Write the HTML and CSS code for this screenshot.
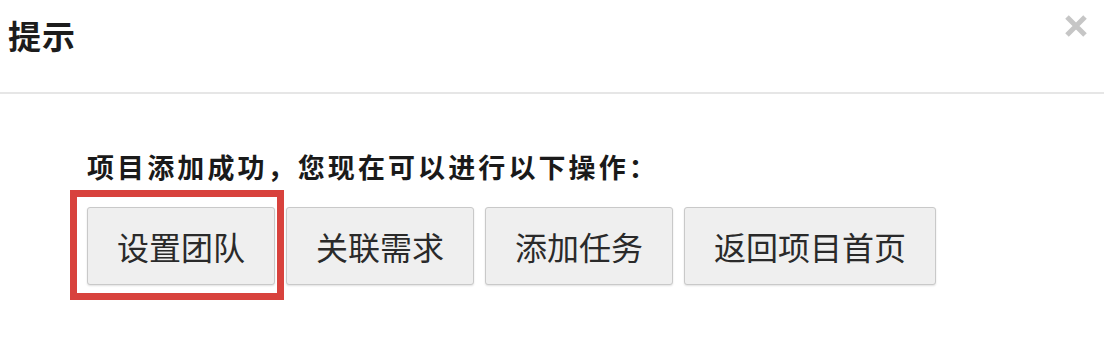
FILE: index.html
```html
<!DOCTYPE html>
<html lang="zh-CN">
<head>
<meta charset="utf-8">
<title>提示</title>
<link rel="stylesheet" href="styles.css">
</head>
<body>
<div class="dialog">
  <div class="dialog-header">
    <h1 class="dialog-title">提示</h1>
    <button class="dialog-close" aria-label="关闭">
      <svg width="24" height="22" viewBox="0 0 24 22"><path d="M3 2 L21 20 M21 2 L3 20" stroke="#c6c6c6" stroke-width="5" stroke-linecap="butt"/></svg>
    </button>
  </div>
  <div class="dialog-body">
    <p class="message">项目添加成功，您现在可以进行以下操作：</p>
    <div class="actions">
      <span class="highlight-wrap">
        <button class="btn">设置团队</button>
        <span class="highlight"></span>
      </span>
      <button class="btn">关联需求</button>
      <button class="btn">添加任务</button>
      <button class="btn">返回项目首页</button>
    </div>
  </div>
</div>
</body>
</html>
```

FILE: styles.css
```css
html, body {
  margin: 0;
  padding: 0;
  background: #ffffff;
}

body {
  font-family: "Noto Sans CJK SC", "Noto Sans", sans-serif;
  color: #222;
}

.dialog {
  width: 1104px;
  height: 348px;
}

.dialog-header {
  height: 92px;
  display: flex;
  justify-content: space-between;
  align-items: flex-start;
  border-bottom: 2px solid #e6e6e6;
  padding: 0 16px 0 8px;
}

.dialog-title {
  margin: 14px 0 0 0;
  font-size: 33px;
  line-height: 42px;
  font-weight: bold;
  letter-spacing: 1px;
  color: #1c1c1c;
}

.dialog-close {
  margin-top: 15px;
  padding: 0;
  border: 0;
  background: transparent;
  width: 24px;
  height: 22px;
  display: block;
}

.dialog-close svg {
  display: block;
}

.dialog-body {
  padding: 0 0 0 87px;
}

.message {
  margin: 55px 0 0 0;
  font-size: 27px;
  line-height: 36px;
  font-weight: bold;
  letter-spacing: 3.1px;
  color: #1a1a1a;
}

.actions {
  margin-top: 22px;
  display: flex;
  gap: 11px;
}

.highlight-wrap {
  position: relative;
  display: block;
}

.btn {
  display: block;
  height: 78px;
  padding: 0 29px;
  font-family: "Noto Sans CJK SC", "Noto Sans", sans-serif;
  font-size: 32px;
  line-height: 76px;
  color: #2a2a2a;
  background: #efefef;
  border: 1px solid #c9c9c9;
  border-radius: 3px;
  box-shadow: 0 1px 2px rgba(0, 0, 0, 0.12);
}

.highlight {
  position: absolute;
  left: -17px;
  top: -17px;
  right: -9px;
  bottom: -15px;
  border: 7px solid #d8423d;
  pointer-events: none;
}
```
